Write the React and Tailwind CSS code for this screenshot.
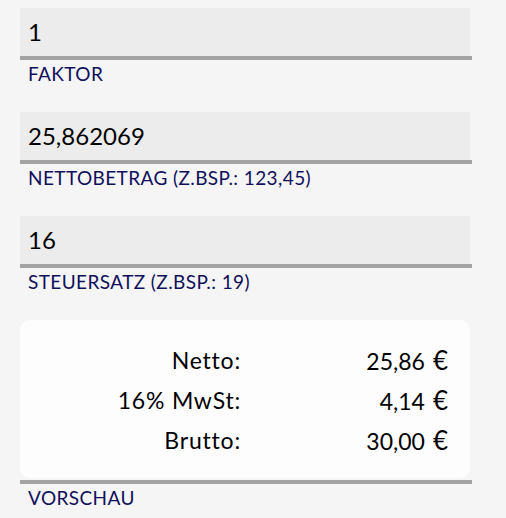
import React from "react";

const fields = [
  { value: "1", label: "FAKTOR" },
  { value: "25,862069", label: "NETTOBETRAG (Z.BSP.: 123,45)" },
  { value: "16", label: "STEUERSATZ (Z.BSP.: 19)" },
];

const rows = [
  ["Netto:", "25,86"],
  ["16% MwSt:", "4,14"],
  ["Brutto:", "30,00"],
];

const Field = ({ value, label }) => (
  <div className="mb-[24px]">
    <div className="w-[452px] border-b-4 border-[#a3a3a3]">
      <div className="w-[450px] h-[48px] bg-[#ececec] pl-2 flex items-center text-[24px] text-black">
        {value}
      </div>
    </div>
    <div className="pl-2 pt-[2px] h-[28px] text-[19px] leading-[24px] tracking-[0.4px] text-[#10105c]">
      {label}
    </div>
  </div>
);

const App = () => {
  return (
    <div
      className="min-h-[518px] bg-[#f5f5f5] px-5 pt-2"
      style={{ fontFamily: "Lato, 'Noto Sans', sans-serif" }}
    >
      {fields.map((f) => (
        <Field key={f.label} value={f.value} label={f.label} />
      ))}
      <div className="w-[452px] border-b-4 border-[#a3a3a3] pb-[2px]">
        <div className="w-[450px] h-[158px] bg-[#fdfdfd] rounded-[10px] px-[22px] pt-[21px]">
          <div className="grid grid-cols-2 gap-x-2 leading-[39px] text-black">
            {rows.map(([k, v]) => (
              <React.Fragment key={k}>
                <div className="text-right text-[23px] tracking-[0.8px]">{k}</div>
                <div className="text-right text-[23px]">
                  {v}
                  <span className="inline-block w-[8px]"></span>
                  <span className="text-[26px]">€</span>
                </div>
              </React.Fragment>
            ))}
          </div>
        </div>
      </div>
      <div className="pl-2 pt-[2px] text-[19px] leading-[24px] tracking-[0.4px] text-[#10105c]">
        VORSCHAU
      </div>
    </div>
  );
};

export default App;
